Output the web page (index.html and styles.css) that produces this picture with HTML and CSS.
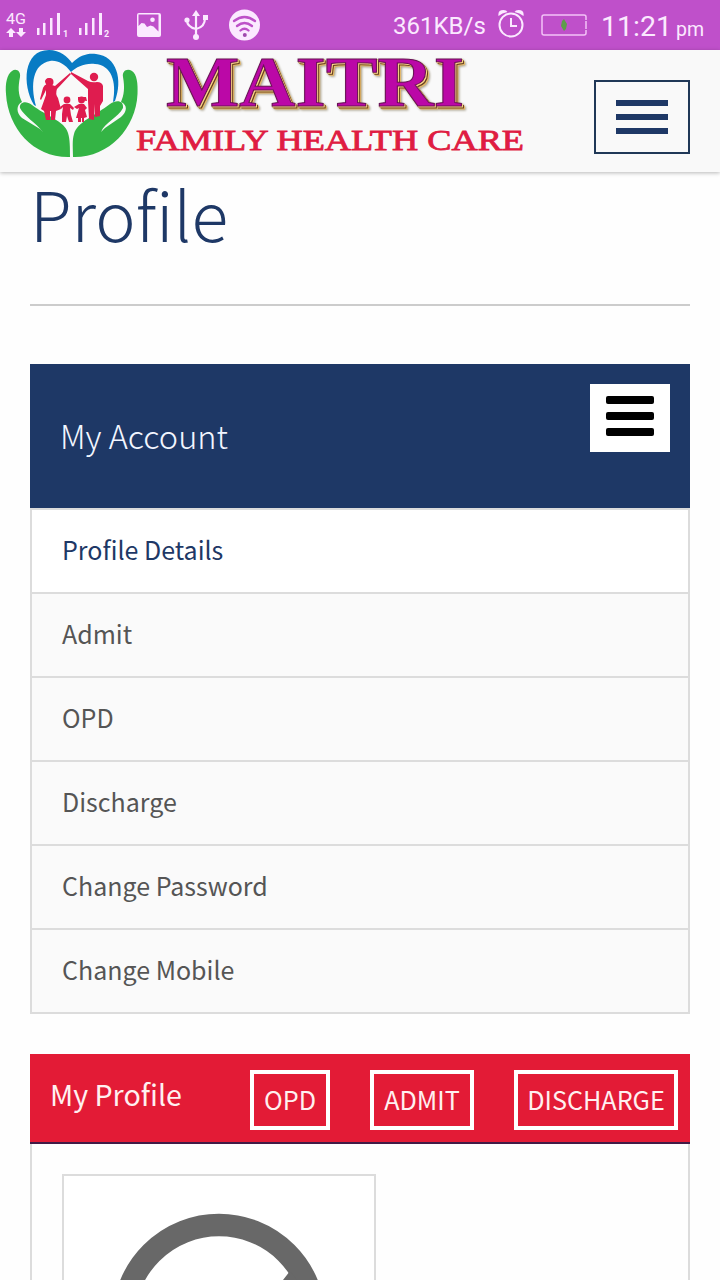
FILE: index.html
```html
<!DOCTYPE html>
<html lang="en">
<head>
<meta charset="utf-8">
<title>Profile</title>
<link rel="stylesheet" href="styles.css">
</head>
<body>
<div class="status">
  <svg class="status-left" width="270" height="50" viewBox="0 0 270 50" fill="#fbe9ff">
    <text class="net" x="6" y="24" textLength="20" lengthAdjust="spacingAndGlyphs">4G</text>
    <path d="M11 28l5 5h-3v4H9v-4H6zM21 37l-5-5h3v-4h4v4h3z"/>
    <path d="M37 28h2.500v7H37zM43 23h2.500v12H43zM50 18h2.500v17H50zM57 13h3v22h-3zM79 28h2.500v7H79zM85 23h2.500v12H85zM92 18h2.500v17H92zM99 13h3v22h-3z"/>
    <text class="sim" x="63" y="37">1</text>
    <text class="sim" x="104" y="37">2</text>
    <path fill-rule="evenodd" d="M139 13h20q2 0 2 2v20q0 2-2 2h-20q-2 0-2-2V15q0-2 2-2zm-.500 1.500V26l3-3 3 .5 2.500 3.500 3.500-1.500 3 1 5 5V14.500zM152.500 17.500a2.300 2.300 0 1 1 0 4.600 2.300 2.300 0 0 1 0-4.600z"/>
    <g fill="none" stroke="#fbe9ff" stroke-width="2.200"><path d="M196 13v24M187 20q0 7 9 9 9-2 9-11"/></g>
    <path d="M196 10l4 6h-8z"/><circle cx="187" cy="20" r="2.600"/><path d="M203 15h5v5h-5z"/><circle cx="196" cy="37" r="3"/>
    <circle cx="244.500" cy="25" r="15.500"/>
    <g fill="none" stroke="#bd50c8" stroke-width="2.300" stroke-linecap="round"><path d="M234 21q10.500-8 21 0M237 26q7.500-6 15 0M240.500 30.500q4-3.500 8 0"/></g>
    <circle cx="244.800" cy="35" r="2" fill="#a049ae"/>
  </svg>
  <div class="status-right">
    <span class="speed">361KB/s</span>
    <svg class="alarm" width="28" height="32" viewBox="0 0 28 32"><g fill="none" stroke="#fbe9ff" stroke-width="2"><circle cx="14" cy="19" r="11.500"/><path d="M14 12v8h6"/></g><path fill="#fbe9ff" d="M1.500 10q-1-6 5-6 3 0 4 2Q5 7 1.500 10zM26.500 10q1-6-5-6-3 0-4 2Q23 7 26.500 10z"/></svg>
    <svg class="battery" width="48" height="24" viewBox="0 0 48 24"><path fill="none" stroke="#f3c2f7" stroke-width="1.500" d="M46 7V4q0-2-2-2H4Q2 2 2 4v16q0 2 2 2h40q2 0 2-2v-3M46 8v8"/><path fill="#5e9c4b" d="M24 6l3 5-1 5-2 2-3-5 1-5z"/></svg>
    <span class="clock">11:21</span><span class="ampm">pm</span>
  </div>
</div>
<header class="header">
  <svg class="logo" width="540" height="122" viewBox="0 50 540 122">
    <path fill="#087bc4" d="M34 105C22 85 23 50 49 50C60 50 68 57 72 63C80 55 88 53 96 54C117 56 123 80 115 101L113 102C117 81 111 65 95 64C84 63 77 67 71 72C64 63 57 60 50 61C33 64 30 84 36 106z"/>
    <g fill="#34b445">
      <path d="M70 157C34 158 8 129 6 94C5 84 7 74 12 71C16 68 21 71 20 77C18 87 18 94 22 102C16 105 16 113 22 118L40 129L43 132C36 123 24 116 20 108C19 102 26 100 32 105C46 116 65 121 68 133C70 139 70 148 70 157z"/>
      <path d="M73 157C108 158 136 129 137.500 94C138 84 137 74 132 71C127 68 122 71 123 77C125 88 124 95 121 102C128 105 127 112 121 117L105 128L101 132C105 122 118 118 123 108C124 101 117 99 110 104C96 115 77 122 74 134C72 140 73 149 73 157z"/>
    </g>
    <g fill="#df1c4f">
      <circle cx="49.500" cy="82" r="4"/><path d="M45 82q0-4 5-4 4 2 2 7l3 1 15-13 1 1-14 15q-2 5 1 9l3 11-5 2-1 9h-4v-9h-1v9h-4l-2-9-3-2 5-14 0-5-3 6-2 4-1-1 3-11q1-3 4-4z"/>
      <circle cx="94" cy="77" r="4.200"/><path d="M71 72l17 9q4 2 9 1 5 0 6 4v15l-3 5v10l-5 1v-13l-1 16-5-1-1-18V89l-17-15z"/>
      <circle cx="67" cy="100" r="3.400"/><path d="M64 104h6l4 4-1 2-3-2 1 7 2 7h-4l-2-6-1 6h-4v-8l1-7-2 2-1-2z"/>
      <circle cx="81.500" cy="100" r="3.400"/><path d="M78 97h8l1 4-9-1zM79 104h5l3 4-2 2 2 7-3 1v4h-2v-4h-1v4h-3v-4h-2l3-10-2 1-3-2z"/>
    </g>
    <text class="brand" x="166" y="106" textLength="298" lengthAdjust="spacingAndGlyphs">MAITRI</text>
    <text class="tagline" x="136" y="150" textLength="388" lengthAdjust="spacingAndGlyphs">FAMILY HEALTH CARE</text>
  </svg>
  <div class="menu"><i></i><i></i><i></i></div>
</header>
<main class="page">
  <h1 class="title">Profile</h1>
  <section class="account">
    <div class="account-head"><h2>My Account</h2><div class="toggle"><i></i><i></i><i></i></div></div>
    <ul class="links">
      <li class="active">Profile Details</li><li>Admit</li><li>OPD</li><li>Discharge</li><li>Change Password</li><li>Change Mobile</li>
    </ul>
  </section>
  <section class="profile">
    <div class="profile-head"><h3>My Profile</h3><span class="btn opd">OPD</span><span class="btn admit">ADMIT</span><span class="btn discharge">DISCHARGE</span></div>
    <div class="profile-body"><div class="photo">
      <svg width="310" height="104" viewBox="64 1176 310 104"><circle cx="219" cy="1320.500" r="95.500" fill="none" stroke="#686868" stroke-width="22.500"/><path fill="#686868" d="M290 1271l-7 9-60 60 16 16 66-66z"/></svg>
    </div></div>
  </section>
</main>
</body>
</html>
```

FILE: styles.css
```css
* { box-sizing: border-box; }
body { margin: 0; width: 720px; height: 1280px; overflow: hidden; background: #fefefe; font-family: "Noto Sans CJK SC", "Noto Sans", sans-serif; }
h1, h2, h3, ul { margin: 0; padding: 0; font-weight: 400; }
svg { display: block; flex: none; }
.status { display: flex; height: 50px; background: #bf50ca; color: #fbe9ff; font-family: Roboto, sans-serif; }
.net { font: 400 15px Roboto, sans-serif; }
.sim { font: 700 9px Roboto, sans-serif; }
.status-right { display: flex; padding-left: 123px; white-space: nowrap; }
.speed { width: 103px; font-size: 24px; line-height: 53px; }
.alarm { margin: 6px 0 0 1px; }
.battery { margin: 13px 0 0 15px; }
.clock { width: 75px; margin-left: 13px; font-size: 28.500px; line-height: 53px; }
.ampm { font-size: 19.500px; line-height: 59px; }
.header { display: flex; height: 122px; background: #f9f9f9; box-shadow: 0 1px 4px rgba(0, 0, 0, .28); }
.brand {
  font: 700 71px "Liberation Serif", serif;
  fill: #bb08a7;
  stroke: #681255;
  stroke-width: 1;
  filter: drop-shadow(1.500px 1px 0 #ffda8a) drop-shadow(1px 1px 0 #65401f) drop-shadow(1px 1px 0 #e6ba68) drop-shadow(1px 1px 1px #a8a08c);
}
.tagline { font: 400 29px "Liberation Serif", serif; fill: #df1c42; stroke: #df1c42; stroke-width: .8; }
.menu { display: flex; flex-direction: column; gap: 8px; width: 96px; height: 74px; margin: 30px 0 0 54px; padding: 18px 20px; border: 2px solid #203857; }
.menu i { height: 6px; background: #1e3866; }
.page { padding: 0 30px; }
.title { height: 134px; border-bottom: 2px solid #ccc; color: #1e3866; font-size: 68px; font-weight: 300; line-height: 82px; }
.account { margin-top: 58px; }
.account-head { display: flex; justify-content: space-between; height: 144px; padding: 20px 20px 0 30px; background: #1e3866; color: #f2f6ff; }
.account-head h2 { font-size: 32.500px; font-weight: 300; line-height: 101px; }
.toggle { display: flex; flex-direction: column; gap: 8px; width: 80px; height: 68px; padding: 12px 16px; background: #fff; }
.toggle i { height: 8px; border-radius: 2px; background: #000; }
.links { border: 2px solid #dcdcdc; border-bottom: 0; list-style: none; }
.links li { height: 84px; padding-left: 30px; border-bottom: 2px solid #dcdcdc; background: #fafafa; color: #555; font-size: 25px; line-height: 78px; }
.links .active { background: #fff; color: #1e3866; }
.profile { margin-top: 40px; }
.profile-head { display: flex; height: 90px; padding: 16px 12px 0 20px; border-bottom: 2px solid #421b46; background: #e31b36; color: #fff0f0; }
.profile-head h3 { width: 200px; font-size: 28.600px; line-height: 47px; }
.btn { height: 60px; border: 4px solid #fff; font-size: 25.200px; line-height: 50px; text-align: center; white-space: nowrap; }
.opd { width: 80px; }
.admit { width: 104px; margin-left: 40px; }
.discharge { width: 164px; margin-left: 40px; }
.profile-body { height: 136px; padding: 30px 30px 0; border: solid #dcdcdc; border-width: 0 2px; }
.photo { width: 314px; height: 106px; border: 2px solid #dcdcdc; border-bottom: 0; background: #fff; }
```
